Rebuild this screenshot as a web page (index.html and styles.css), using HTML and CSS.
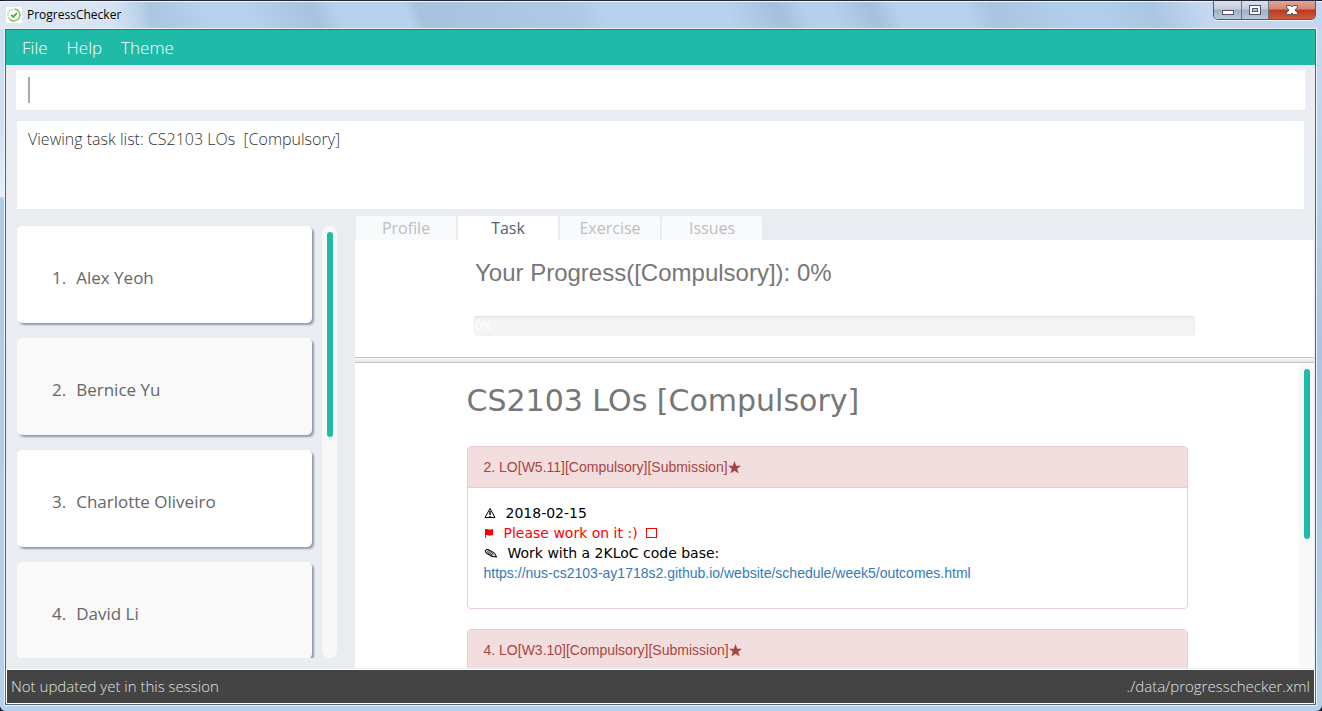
FILE: index.html
```html
<!DOCTYPE html>
<html lang="en">
<head>
<meta charset="utf-8">
<title>ProgressChecker</title>
<link rel="stylesheet" href="styles.css">
</head>
<body>
<div class="window">
  <header class="titlebar">
    <svg class="app-icon" viewBox="0 0 16 16" aria-hidden="true">
      <rect width="16" height="16" fill="#fff"/>
      <path d="M8.500 2A6 6 0 1 1 3.500 12" fill="none" stroke="#7cc142" stroke-width="1.400"/>
      <path d="M3 11.500A6 6 0 0 1 7.500 2" fill="none" stroke="#a5d57e" stroke-width="1.400" stroke-dasharray="1.500 1"/>
      <path d="M5.200 7.800L7.300 9.800L11 6" fill="none" stroke="#2f9e44" stroke-width="1.600"/>
    </svg>
    <h1 class="app-title">ProgressChecker</h1>
    <div class="window-buttons">
      <button class="win-btn" type="button" aria-label="Minimize">
        <svg viewBox="0 0 14 12" width="14" height="12"><rect x="1.500" y="6.500" width="11" height="4" fill="#fff" stroke="#535666"/></svg>
      </button>
      <button class="win-btn" type="button" aria-label="Maximize">
        <svg viewBox="0 0 14 12" width="14" height="12"><rect x="1.500" y="1.500" width="11" height="9" fill="#fff" stroke="#535666"/><rect x="4.500" y="4.500" width="5" height="3" fill="#a9c3dd" stroke="#535666"/></svg>
      </button>
      <button class="win-btn win-close" type="button" aria-label="Close">
        <svg viewBox="0 0 14 12" width="14" height="12"><path d="M1.500 1.500H5.500L7 3L8.500 1.500H12.500V3L10 6L12.500 9V10.500H8.500L7 9L5.500 10.500H1.500V9L4 6L1.500 3Z" fill="#fff" stroke="#535666"/></svg>
      </button>
    </div>
  </header>

  <div class="client">
    <nav class="menubar">
      <button class="menu" type="button">File</button>
      <button class="menu" type="button">Help</button>
      <button class="menu" type="button">Theme</button>
    </nav>

    <label class="command">
      <span class="caret"></span>
      <input class="command-input" type="text" aria-label="Command">
    </label>

    <output class="result">Viewing task list: CS2103 LOs&nbsp; [Compulsory]</output>

    <main class="split">
      <section class="people">
        <ol class="cards">
          <li class="card"><span>1.</span><span>Alex Yeoh</span></li>
          <li class="card card-alt"><span>2.</span><span>Bernice Yu</span></li>
          <li class="card"><span>3.</span><span>Charlotte Oliveiro</span></li>
          <li class="card card-alt"><span>4.</span><span>David Li</span></li>
        </ol>
        <div class="track"><div class="thumb thumb-people"></div></div>
      </section>

      <section class="browser">
        <div class="tabs" role="tablist">
          <button class="tab" type="button" role="tab">Profile</button>
          <button class="tab tab-active" type="button" role="tab" aria-selected="true">Task</button>
          <button class="tab" type="button" role="tab">Exercise</button>
          <button class="tab" type="button" role="tab">Issues</button>
        </div>
        <div class="progress-pane">
          <div class="progress-inner">
            <h2 class="progress-title">Your Progress([Compulsory]): 0%</h2>
            <div class="bar"><span class="bar-text">0%</span></div>
          </div>
        </div>
        <div class="divider"></div>
        <div class="task-pane">
          <div class="task-view">
            <h2 class="task-title">CS2103 LOs [Compulsory]</h2>
            <article class="panel">
              <h3 class="panel-head">2. LO[W5.11][Compulsory][Submission]<svg class="star" viewBox="0 0 13 13" aria-hidden="true"><path d="M6.500 0L8.200 4.700H13L9.200 7.700L10.600 12.500L6.500 9.700L2.400 12.500L3.800 7.700L0 4.700H4.800Z"/></svg></h3>
              <div class="panel-body">
                <p class="line">
                  <svg class="glyph" viewBox="0 0 12 12" aria-hidden="true"><path d="M6 1.500L11 10.500H1Z" fill="none" stroke="#000"/><path d="M6 4V8M6 9V10" stroke="#000" stroke-width="1.400"/></svg>
                  <span>2018-02-15</span>
                </p>
                <p class="line line-due">
                  <svg class="glyph-flag" viewBox="0 0 10 12" aria-hidden="true"><path d="M1 2H3Q5 3 9 2V8Q5 9 3 8H2V11H1Z" fill="#f00"/></svg>
                  <span>Please work on it :)</span>
                  <svg class="glyph-box" viewBox="0 0 12 12" aria-hidden="true"><rect x=".5" y="1.500" width="10" height="9" fill="none" stroke="#f00"/></svg>
                </p>
                <p class="line">
                  <svg class="glyph-pencil" viewBox="0 0 14 12" aria-hidden="true"><path d="M1 4Q2 1.500 4.500 2.500L10.500 6L12.500 10L8 9.500L2.500 6.500Z" fill="#fff" stroke="#000"/><path d="M2.500 3.500L9 8.500M4 3L10 7.500M2 5L8 9M10.500 9L12.500 10" stroke="#000" stroke-width=".8"/></svg>
                  <span>Work with a 2KLoC code base:</span>
                </p>
                <p class="line"><a class="link" href="https://nus-cs2103-ay1718s2.github.io/website/schedule/week5/outcomes.html">https://nus-cs2103-ay1718s2.github.io/website/schedule/week5/outcomes.html</a></p>
              </div>
            </article>
            <article class="panel">
              <h3 class="panel-head">4. LO[W3.10][Compulsory][Submission]<svg class="star" viewBox="0 0 13 13" aria-hidden="true"><path d="M6.500 0L8.200 4.700H13L9.200 7.700L10.600 12.500L6.500 9.700L2.400 12.500L3.800 7.700L0 4.700H4.800Z"/></svg></h3>
              <div class="panel-body"></div>
            </article>
          </div>
          <div class="track"><div class="thumb thumb-task"></div></div>
        </div>
      </section>
    </main>

    <footer class="status">
      <span>Not updated yet in this session</span>
      <span>./data/progresschecker.xml</span>
    </footer>
  </div>
</div>
</body>
</html>
```
FILE: styles.css
```css
* { box-sizing: border-box; }

body {
  margin: 0;
  background: #14181f;
  font-family: "Open Sans", "Noto Sans", sans-serif;
}

h1, h2, h3, p, ol { margin: 0; padding: 0; font-weight: 400; }
button { border: 0; padding: 0; background: none; font: inherit; color: inherit; }

.window {
  display: flex;
  flex-direction: column;
  height: 100vh;
  padding-bottom: 5px;
  border-top: 1px solid #25283a;
  border-radius: 6px;
  background:
    linear-gradient(#cbdff2 0, #cfe0f2 120px, #e6eff9 196px, #aecbe8 197px, #b4d1ee 100%) left / 5px 100% no-repeat,
    linear-gradient(#c8daf2 0, #bcd2ee 200px, #a9c5e3 340px, #b4d1ee 100%);
}

.titlebar {
  display: flex;
  flex: none;
  gap: 5px;
  height: 28px;
  padding: 5px 5px 0 6px;
  border-top: 1px solid #f4f8fc;
  background:
    linear-gradient(90deg, #dfe9f5, #dfe9f5cc 110px, #dfe9f500 150px),
    linear-gradient(68deg, #b5cfe9 0 10%, #abc6e1 12%, #b7d2ed 16% 19%, #a8c2dd 24%, #b7d2ee 26% 31%, #a8c2dd 32%, #aecae4 44%, #b7d2ed 46% 55%, #a5c0dc 59%, #b5d0ec 61% 63%, #a5c0dc 66%, #b7d2ee 68% 73%, #a9c4df 75%, #b1cfec 81% 83%, #a9c6e2 87%, #c5d7f0 91% 100%);
}
.app-icon { width: 16px; height: 16px; }
.app-title {
  font-size: 12px;
  line-height: 16px;
  color: #000;
}
.window-buttons {
  display: flex;
  height: 19px;
  margin: -6px 1px 0 auto;
  border: 1px solid #50586a;
  border-top: 0;
  border-radius: 0 0 5px 5px;
  box-shadow: 0 1px 0 #eef4fb;
  overflow: hidden;
}
.win-btn {
  display: grid;
  place-items: center;
  width: 28px;
  border-right: 1px solid #6b7485;
  background: linear-gradient(#d9e2ec, #c3cdd9 45%, #9fafc1 50%, #b9cadc);
}
.win-btn + .win-btn { width: 27px; }
.win-btn + .win-close {
  width: 46px;
  border-right: 0;
  background: linear-gradient(#e4a594, #d58572 45%, #b83a20 50%, #cf5a3b);
}

.client {
  display: flex;
  flex: 1;
  flex-direction: column;
  min-height: 0;
  margin: 0 6px 1px 5px;
  border: 1px solid #566474;
  outline: 1px solid #eef3f9;
  background: #e9edf2;
}

.menubar {
  display: flex;
  flex: none;
  gap: 19px;
  height: 35px;
  padding: 0 16px;
  background: #20bba8;
  color: #fff;
  font-size: 17px;
  font-weight: 300;
}

.command {
  display: flex;
  flex: none;
  align-items: center;
  height: 40px;
  margin: 5px 10px 0;
  padding: 0 12px;
  background: #fff;
}
.caret { width: 2px; height: 26px; background: #a9a9a9; }
.command-input {
  flex: 1;
  border: 0;
  outline: 0;
  background: none;
  font: 300 17px "Open Sans", sans-serif;
}

.result {
  flex: none;
  height: 88px;
  margin: 11px 11px 0;
  padding: 6px 11px;
  background: #fff;
  color: #333;
  font-size: 16px;
  font-weight: 300;
  line-height: 24px;
}

.split {
  display: grid;
  flex: 1;
  grid-template-columns: 331px 1fr;
  gap: 18px;
  min-height: 0;
  padding: 7px 1px 1px 0;
}

.people {
  display: flex;
  gap: 5px;
  min-height: 0;
  padding: 10px 0 10px 11px;
}
.cards {
  flex: 1;
  padding-right: 5px;
  overflow: hidden;
  list-style: none;
}
.card {
  display: flex;
  align-items: center;
  gap: 10px;
  height: 97px;
  margin-bottom: 15px;
  padding: 6px 35px 0;
  border-radius: 5px;
  background: #fff;
  box-shadow: 2px 2px 2px #8f9cae;
  color: #666;
  font-size: 17px;
}
.card-alt { background: #f9f9f9; }

.track {
  flex: none;
  width: 15px;
  padding: 6px 4px 6px 5px;
  border-radius: 8px;
  background: #f8f8f8;
}
.thumb { border-radius: 3px; background: #20bba8; }
.thumb-people { height: 205px; }
.thumb-task { height: 170px; }

.browser {
  display: flex;
  flex-direction: column;
  min-width: 0;
  min-height: 0;
}
.tabs {
  display: flex;
  flex: none;
  gap: 2px;
  padding-left: 1px;
}
.tab {
  width: 100px;
  height: 24px;
  border-radius: 3px 3px 0 0;
  background: #f9fafc;
  color: #bebebe;
  font-size: 16px;
  line-height: 24px;
}
.tab-active { background: #fff; color: #506078; }

.progress-pane {
  flex: none;
  height: 117px;
  padding-top: 20px;
  background: #fff;
}
.progress-inner {
  max-width: 721px;
  margin: 0 auto;
}
.progress-title {
  padding-left: 1px;
  color: #777;
  font: 24px/26px "Liberation Sans", Arial, sans-serif;
}
.bar {
  height: 20px;
  margin-top: 30px;
  border-radius: 4px;
  background: #f4f4f4;
  box-shadow: inset 0 1px 2px #0000001a;
}
.bar-text {
  display: block;
  padding-left: 1px;
  color: #fff;
  font-size: 12px;
  line-height: 20px;
}

.divider {
  flex: none;
  height: 6px;
  border-top: 1px solid #c3c3c3;
  border-bottom: 1px solid #c3c3c3;
  background: linear-gradient(#fafafa, #e6e6e6);
}

.task-pane {
  display: flex;
  flex: 1;
  min-height: 0;
  background: #fff;
}
.task-view {
  display: grid;
  flex: 1;
  grid-template-columns: minmax(0, 721px);
  align-content: start;
  justify-content: center;
  padding-top: 20px;
  overflow: hidden;
}
.task-title {
  margin-bottom: 27px;
  color: #777;
  font: 30px/36px "DejaVu Sans", Verdana, sans-serif;
}
.panel {
  margin-bottom: 20px;
  border: 1px solid #ebccd1;
  border-radius: 4px;
}
.panel-head {
  display: flex;
  align-items: center;
  height: 41px;
  padding: 0 16px;
  border-bottom: 1px solid #ebccd1;
  background: #f2dede;
  color: #a94442;
  font: 14px/20px "Liberation Sans", Arial, sans-serif;
}
.star { width: 13px; height: 13px; fill: #a94442; }
.panel-body {
  min-height: 120px;
  padding: 15px 16px;
  color: #000;
  font: 14px/20px "DejaVu Sans", Verdana, sans-serif;
}
.line { display: flex; align-items: center; height: 20px; }
.line-due { color: #f00; }
.glyph { width: 12px; height: 12px; margin-right: 10px; }
.glyph-flag { width: 10px; height: 12px; margin-right: 10px; }
.glyph-pencil { width: 14px; height: 12px; margin-right: 10px; }
.glyph-box { width: 12px; height: 12px; margin-left: 8px; }
.link {
  color: #337ab7;
  font-family: "Liberation Sans", Arial, sans-serif;
  text-decoration: none;
}

.status {
  display: flex;
  flex: none;
  align-items: center;
  justify-content: space-between;
  height: 35px;
  padding: 0 4px 2px;
  border: 1px solid #fff;
  background: #444;
  color: #e0e0e0;
  font-size: 15px;
  font-weight: 300;
}
```
